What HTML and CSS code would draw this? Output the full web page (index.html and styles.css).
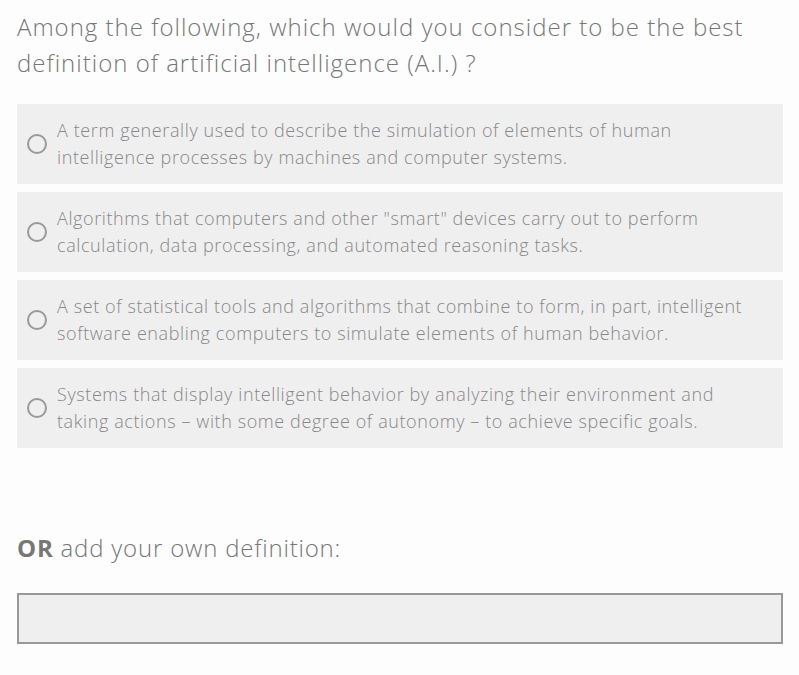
FILE: index.html
```html
<!DOCTYPE html>
<html lang="en">
    <head>
        <meta charset="utf-8">
        <meta name="viewport" content="width=device-width, initial-scale=1">
        <title>Definition of A.I.</title>
        <link rel="stylesheet" href="styles.css">
    </head>
    <body>
        <div class="question">
            <h2>Among the following, which would you consider to be the best definition of artificial intelligence (A.I.) ?</h2>

            <div class="choices">
                <label class="choice">
                    <span class="radio"></span>
                    <span class="choice-text">A term generally used to describe the simulation of elements of human intelligence processes by machines and computer systems.</span>
                </label>
                <label class="choice">
                    <span class="radio"></span>
                    <span class="choice-text">Algorithms that computers and other "smart" devices carry out to perform calculation, data processing, and automated reasoning tasks.</span>
                </label>
                <label class="choice">
                    <span class="radio"></span>
                    <span class="choice-text">A set of statistical tools and algorithms that combine to form, in part, intelligent software enabling computers to simulate elements of human behavior.</span>
                </label>
                <label class="choice">
                    <span class="radio"></span>
                    <span class="choice-text">Systems that display intelligent behavior by analyzing their environment and taking actions &ndash; with some degree of autonomy &ndash; to achieve specific goals.</span>
                </label>
            </div>

            <p class="own"><b>OR</b> add your own definition:</p>
            <div class="own-input"></div>
        </div>
    </body>
</html>
```

FILE: styles.css
```css
body {
    font-family: "Open Sans", "Lato", sans-serif;
    font-weight: 300;
    margin: 0px;
    background-color: #fdfdfd;
    color: #777;
}

.question {
    padding: 9px 16px 0px 17px;
}

h2 {
    font-size: 24px;
    font-weight: 300;
    line-height: 36px;
    letter-spacing: 1px;
    margin: 0px 0px 23px 0px;
    color: #777;
}

.choices {
    display: flex;
    flex-direction: column;
    gap: 8px;
}

.choice {
    display: flex;
    align-items: center;
    height: 80px;
    padding: 0px 23px 0px 10px;
    background-color: #efefef;
    box-sizing: border-box;
}

.radio {
    flex: none;
    width: 16px;
    height: 16px;
    border: 2px solid #999;
    border-radius: 50%;
    margin-right: 10px;
}

.choice-text {
    font-size: 18px;
    line-height: 27px;
    letter-spacing: 0.6px;
    color: #888;
}

.own {
    font-size: 24px;
    margin: 82px 0px 27px 0px;
    line-height: 36px;
    letter-spacing: 0.8px;
    color: #777;
}

.own b {
    font-weight: 700;
}

.own-input {
    height: 47px;
    border: 2px solid #999;
    background-color: #efefef;
}
```
